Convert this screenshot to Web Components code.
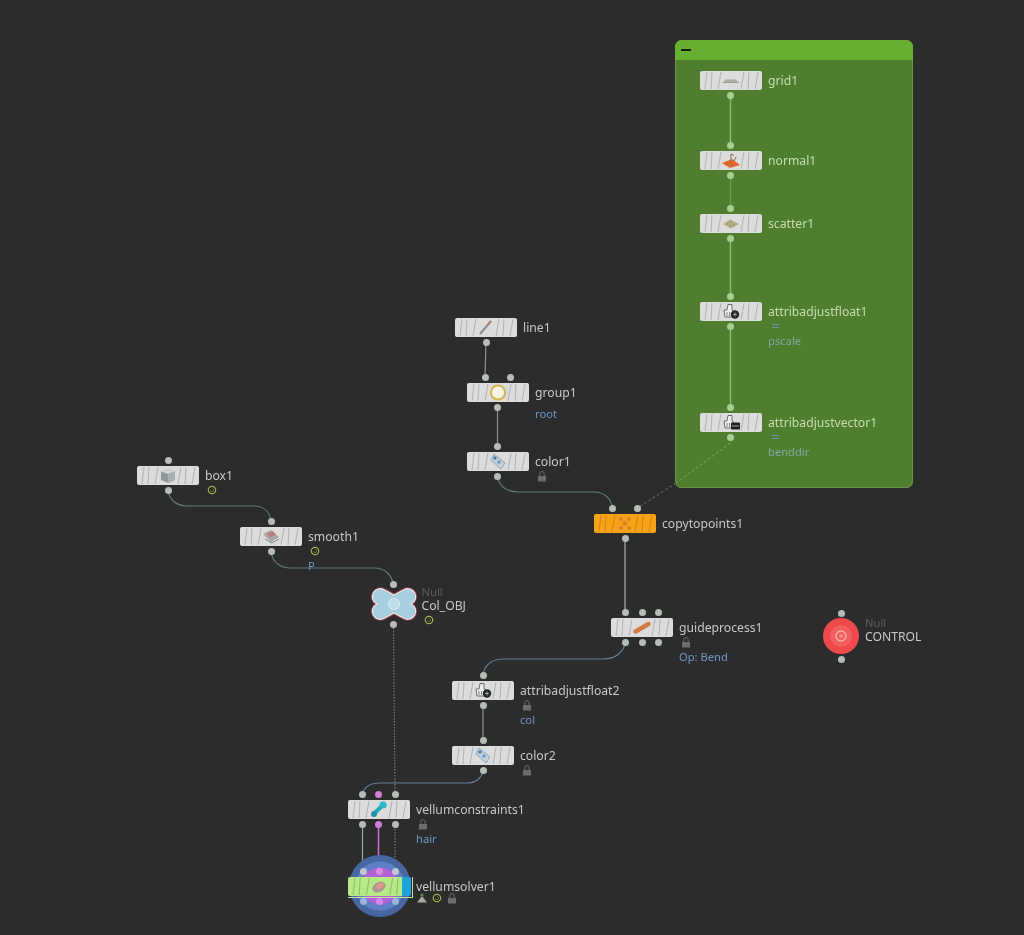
<!DOCTYPE html>
<html lang="en">
<head>
<meta charset="utf-8">
<title>Network view</title>
<style>
  html, body { margin: 0; background: #2c2c2c; }
</style>
</head>
<body>
<hou-network>
  <hou-netbox x="675" y="40" w="238" h="448"></hou-netbox>
  <hou-wires></hou-wires>

  <hou-node x="700" y="71" icon="grid" label="grid1" out="30.5" ingroup></hou-node>
  <hou-node x="700" y="151" icon="normal" label="normal1" in="30.5" out="30.5" ingroup></hou-node>
  <hou-node x="700" y="214" icon="scatter" label="scatter1" in="30.5" out="30.5" ingroup></hou-node>
  <hou-node x="700" y="302" icon="adjust" label="attribadjustfloat1" in="30.5" out="30.5" flags="eq" sub="pscale" ingroup></hou-node>
  <hou-node x="700" y="413" icon="adjustv" label="attribadjustvector1" in="30.5" out="30.5" flags="eq" sub="benddir" ingroup></hou-node>

  <hou-node x="455" y="318" icon="line" label="line1" out="31"></hou-node>
  <hou-node x="467" y="383" icon="group" label="group1" in="18,43" out="30.5" sub="root"></hou-node>
  <hou-node x="467" y="452" icon="color" label="color1" in="30.5" out="30.5" flags="lock"></hou-node>
  <hou-node x="594" y="514" icon="copy" label="copytopoints1" in="18,43.5" out="31" tone="orange"></hou-node>

  <hou-node x="137" y="466" icon="box" label="box1" in="31" out="31" flags="disp"></hou-node>
  <hou-node x="240" y="527" icon="smooth" label="smooth1" in="31" out="31" flags="disp" sub="P"></hou-node>
  <hou-null cx="393.5" cy="604" shape="cross" label="Col_OBJ" flags="disp"></hou-null>
  <hou-null cx="841" cy="636" shape="round" label="CONTROL"></hou-null>

  <hou-node x="611" y="618" icon="guide" label="guideprocess1" in="14.5,31,47.5" out="14.5,31,47.5" flags="lock" sub="Op: Bend"></hou-node>
  <hou-node x="452" y="681" icon="adjust" label="attribadjustfloat2" in="31" out="31" flags="lock" sub="col"></hou-node>
  <hou-node x="452" y="746" icon="color" label="color2" in="31" out="31" flags="lock"></hou-node>
  <hou-node x="348" y="800" icon="constraints" label="vellumconstraints1" in="14.5,30.5:pink,47" out="14.5,30.5:pink,47" flags="lock" sub="hair"></hou-node>
  <hou-solver x="348" y="877" label="vellumsolver1"></hou-solver>
</hou-network>

<script>
/* ------------- SHARED ------------- */
const FONT = `"Noto Sans", "Open Sans", sans-serif`;

const STRIPES = /*html*/`
  <svg class="stripes" viewBox="0 0 62 19" width="100%" height="100%" preserveAspectRatio="none">
    <g stroke="#8f9092" stroke-width="1" fill="none" opacity=".55">
      <path d="M5 18 L7 1"/><path d="M11 18 L12 1"/><path d="M18 18 L21 1"/>
      <path d="M41 18 L44 1"/><path d="M48 18 L49 1"/><path d="M55 18 L58 1"/>
    </g>
  </svg>`;

const ADJUST_HAND = `<path d="M3 8 H6 L7 2.5 H11 V8 H12 V15 H4 Z" fill="#eceef0" stroke="#6a6f73" stroke-width="1"/><path d="M6 10 V14 M8.5 10 V14" stroke="#6a6f73" stroke-width=".8"/>`;

const ICONS = {
  grid: `<path d="M1 12 L5 8 H14 L19 12 Z" fill="#c0c0ba"/><path d="M3.5 10 H16 M2 11.5 H18" stroke="#8c8c86" stroke-width=".7"/>`,
  normal: `<path d="M1 12 L11 8 L19 14 L9 17 Z" fill="#e0672c"/><path d="M10 11 V3 L13 4.5 M13 10 L15 6" stroke="#8c6a58" stroke-width="1" fill="none"/>`,
  scatter: `<path d="M2 10 L9 5.5 L18 10 L10 14.5 Z" fill="#b3ad84"/><path d="M6 10 h1 M10 8 h1 M12 11 h1 M9 12 h1" stroke="#7f7b5e" stroke-width="1"/>`,
  adjust: `${ADJUST_HAND}<circle cx="14" cy="12.5" r="4.2" fill="#26282a"/><path d="M12 12.5 H16 M14 10.5 V14.5" stroke="#bdbdbd" stroke-width=".8"/>`,
  adjustv: `${ADJUST_HAND}<rect x="10" y="9.5" width="9" height="7" rx="1" fill="#1d1f20"/><path d="M11 13 H18" stroke="#cfcfcf" stroke-width=".8"/>`,
  line: `<path d="M4 16 L15 3" stroke="#8d8d8d" stroke-width="2"/><path d="M12 7 L15 3" stroke="#b5826a" stroke-width="2"/>`,
  group: `<circle cx="10" cy="9.5" r="7" fill="#f6f4e6" stroke="#d7b64a" stroke-width="2"/><path d="M15 3.5 A8 8 0 0 1 16 15" stroke="#b8c99a" stroke-width="1" fill="none"/>`,
  color: `<path d="M6 2 L17 11 L13 17 L3 8 Z" fill="#c4d0da" stroke="#8b98a2" stroke-width=".8"/><circle cx="7" cy="6" r="1.7" fill="#4a7fb0"/><circle cx="11" cy="10" r="1.7" fill="#6d9bc0"/>`,
  box: `<path d="M3 5.5 L10 3 L17 5.5 V14 L10 17 L3 14 Z" fill="#8f9798"/><path d="M3 5.5 L10 8 L17 5.5 L10 3 Z" fill="#cfd6d7"/><path d="M10 8 V17 L17 14 V5.5 Z" fill="#a9b1b2"/>`,
  smooth: `<path d="M2 7 L10 3 L18 10 L10 15 Z" fill="#a9a6a6"/><path d="M6 6 L12 4 L15 8 L9 10 Z" fill="#b77d83"/><path d="M4 12 L11 16 L18 12" stroke="#85878a" fill="none"/>`,
  copy: `<g fill="#d8842a"><circle cx="6" cy="5" r="2"/><circle cx="14" cy="5" r="2"/><circle cx="10" cy="9.5" r="2.4"/><circle cx="6" cy="14" r="2"/><circle cx="14" cy="14" r="2"/></g>`,
  guide: `<path d="M3.5 13.5 L16.5 6" stroke="#d27a45" stroke-width="4.4" stroke-linecap="round"/>`,
  constraints: `<path d="M4.5 14 L13 6" stroke="#21a7b8" stroke-width="4"/><circle cx="14" cy="5" r="3.6" fill="#2bb7c2"/><circle cx="5" cy="14" r="3" fill="#1e93a8"/>`,
  solver: `<ellipse cx="10" cy="10" rx="7" ry="5" fill="#a99a8f" transform="rotate(-30 10 10)"/><ellipse cx="11" cy="9" rx="4" ry="2.5" fill="#dc9a86" transform="rotate(-30 11 9)"/>`
};

const FLAGS = {
  lock: `<svg viewBox="0 0 12 12" width="12" height="12"><path d="M3.8 6 V3.8 a2.2 2.2 0 0 1 4.4 0 V6" fill="none" stroke="#6c6c6c" stroke-width="1"/><rect x="2" y="6" width="8" height="5.5" fill="#6c6c6c"/></svg>`,
  disp: `<svg viewBox="0 0 12 12" width="12" height="12"><circle cx="6" cy="6" r="3.7" fill="#23241d" stroke="#a9ac55" stroke-width="1.2"/><path d="M6 4.5 A1.6 1.6 0 1 1 4.5 6" fill="none" stroke="#7f8d4a" stroke-width=".7"/></svg>`,
  eq: `<svg viewBox="0 0 12 12" width="12" height="12"><path d="M3 4.5 H10 M3 7.5 H10" stroke="#6f94a8" stroke-width="1.2"/></svg>`,
  bypass: `<svg viewBox="0 0 12 12" width="12" height="12"><path d="M1 10.5 L6 4 L11 10.5 Z" fill="#a8aaa0"/><circle cx="6" cy="3" r="1.6" fill="#5f8a3e"/></svg>`
};

const flagsMarkup = (value) => (value || "").split(",").filter(Boolean).map(f => FLAGS[f]).join("");

const dotsMarkup = (value, side) => (value || "").split(",").filter(Boolean).map(item => {
  const [x, tone] = item.split(":");
  return `<span class="dot ${side} ${tone || ""}" style="left:${x}px"></span>`;
}).join("");

const LABEL_STYLES = /*css*/`
  .text {
    position: absolute;
    left: calc(100% + 6px);
    top: 0;
    white-space: nowrap;
    font: 12.2px/19px ${FONT};
    color: var(--label, #c8c8c8);
  }
  .name { height: 19px; }
  .flags { display: flex; gap: 3px; height: 14px; margin: -2px 0 0 1px; align-items: center; }
  .flags:empty { height: 4px; margin: 0; }
  .sub { font-size: 11.2px; line-height: 15px; color: var(--sub, #7094c4); }
  .sub:empty { display: none; }
`;

const DOT_STYLES = /*css*/`
  .dot {
    position: absolute;
    width: 7px;
    height: 7px;
    margin-left: -3.5px;
    border-radius: 50%;
    background: var(--dot, #b6bcb6);
  }
  .dot.in { top: -9px; }
  .dot.out { bottom: -9px; }
  .dot.pink { background: #cf7fd6; }
`;

/* ------------ NETWORK ------------- */
const template_network = document.createElement("template");

template_network.innerHTML = /*html*/`
  <style>
    :host {
      display: block;
      position: relative;
      width: 1024px;
      height: 935px;
      overflow: hidden;
      background: #2c2c2c;
      filter: blur(.5px);
    }
  </style>
  <slot></slot>
`;

class HouNetwork extends HTMLElement {
  constructor() {
    super();
    this.attachShadow({ mode: "open" }).append(template_network.content.cloneNode(true));
  }
}

/* ------------- NETBOX ------------- */
const template_netbox = document.createElement("template");

template_netbox.innerHTML = /*html*/`
  <style>
    :host {
      display: flex;
      flex-direction: column;
      position: absolute;
      box-sizing: border-box;
      border-radius: 7px;
      overflow: hidden;
      background: #4f7f2e;
      box-shadow: inset -1px -1px 0 #659643, inset 1px 0 0 #659643;
    }
    header {
      display: flex;
      align-items: center;
      flex: 0 0 20px;
      padding-left: 6px;
      background: #67b02f;
    }
    i { display: block; width: 10px; height: 2px; background: #17210f; }
  </style>
  <header><i></i></header>
`;

class HouNetbox extends HTMLElement {
  constructor() {
    super();
    this.attachShadow({ mode: "open" }).append(template_netbox.content.cloneNode(true));
  }

  connectedCallback() {
    this.style.left = this.getAttribute("x") + "px";
    this.style.top = this.getAttribute("y") + "px";
    this.style.width = this.getAttribute("w") + "px";
    this.style.height = this.getAttribute("h") + "px";
  }
}

/* -------------- WIRES ------------- */
const template_wires = document.createElement("template");

template_wires.innerHTML = /*html*/`
  <style>
    :host { position: absolute; inset: 0; display: block; }
    svg { display: block; }
    path { fill: none; stroke-width: 1.2; }
    .plain { stroke: #8d8f8d; }
    .teal { stroke: #5f7d7a; }
    .blue { stroke: #64809a; }
    .green { stroke: #8dbb78; stroke-width: 1.4; }
    .soft { stroke: #6d9a54; }
    .pink { stroke: #c36fca; stroke-width: 1.6; }
    .light { stroke: #9aa8a8; }
    .dots { stroke: #7a7a7a; stroke-dasharray: 1.5 1.5; }
    .dash-g { stroke: #6f9a53; stroke-dasharray: 3 2; }
    .dash { stroke: #535f54; stroke-dasharray: 3 2; }
  </style>
  <svg width="1024" height="935" viewBox="0 0 1024 935">
    <path class="green" d="M730.5 94 V145"/>
    <path class="soft" d="M730.5 174 V208"/>
    <path class="green" d="M730.5 238 V296"/>
    <path class="green" d="M730.5 326 V407"/>
    <path class="dash-g" d="M730.5 443 L676 483"/>
    <path class="dash" d="M676 483 L637.5 508"/>

    <path class="plain" d="M486 342 L485 377"/>
    <path class="plain" d="M497.5 407 V446"/>
    <path class="teal" d="M497.5 477 C499 486 507 492 518 492 H594 C605 492 611 499 612.5 508"/>
    <path class="teal" d="M168 490 C169 500 177 506 187 506 H254 C264 506 270 512 271 522"/>
    <path class="teal" d="M271 551 C272 562 280 568 291 568 H374 C385 568 392 575 393.5 585"/>
    <path class="dots" d="M393.5 625 L395 795"/>
    <path class="plain" d="M625 538 V613" style="stroke-width:1.6"/>
    <path class="blue" d="M625.5 642 C624 652 615 659 604 659 H504 C491 659 484 666 483 675"/>
    <path class="plain" d="M483 705 V740"/>
    <path class="blue" d="M483 770 C482 778 476 783 467 783 H380 C369 783 363 788 362.5 795"/>

    <path class="light" d="M362.5 823 V871"/>
    <path class="pink" d="M378.5 823 V871"/>
    <path class="dots" d="M395 823 V871"/>
  </svg>
`;

class HouWires extends HTMLElement {
  constructor() {
    super();
    this.attachShadow({ mode: "open" }).append(template_wires.content.cloneNode(true));
  }
}

/* -------------- NODE -------------- */
const template_node = document.createElement("template");

template_node.innerHTML = /*html*/`
  <style>
    :host {
      display: block;
      position: absolute;
      width: 62px;
      height: 19px;
    }
    :host([ingroup]) {
      --dot: #a9cd97;
      --label: #c4deaf;
      --sub: #7fa3a6;
    }
    .body {
      position: relative;
      width: 100%;
      height: 100%;
      border-radius: 2px;
      background: #dcdcdc;
      overflow: hidden;
    }
    :host([tone="orange"]) .body { background: #f8a217; }
    :host([tone="orange"]) .stripes g { stroke: #b36f10; }
    .stripes { display: block; position: absolute; inset: 0; }
    .icon { position: absolute; left: 21px; top: 0; }
    ${DOT_STYLES}
    ${LABEL_STYLES}
  </style>
  <div class="body">
    ${STRIPES}
    <svg class="icon" viewBox="0 0 20 19" width="20" height="19"></svg>
  </div>
  <div class="inputs"></div>
  <div class="outputs"></div>
  <div class="text">
    <div class="name"></div>
    <div class="flags"></div>
    <div class="sub"></div>
  </div>
`;

class HouNode extends HTMLElement {
  constructor() {
    super();
    this.attachShadow({ mode: "open" }).append(template_node.content.cloneNode(true));
  }

  connectedCallback() {
    const root = this.shadowRoot;
    this.style.left = this.getAttribute("x") + "px";
    this.style.top = this.getAttribute("y") + "px";
    root.querySelector(".icon").innerHTML = ICONS[this.getAttribute("icon")] || "";
    root.querySelector(".inputs").innerHTML = dotsMarkup(this.getAttribute("in"), "in");
    root.querySelector(".outputs").innerHTML = dotsMarkup(this.getAttribute("out"), "out");
    root.querySelector(".name").textContent = this.getAttribute("label");
    root.querySelector(".flags").innerHTML = flagsMarkup(this.getAttribute("flags"));
    root.querySelector(".sub").textContent = this.getAttribute("sub") || "";
  }
}

/* -------------- NULL -------------- */
const CROSS_ARMS = `<rect x="3" y="12.5" width="46" height="15" rx="7.5" transform="rotate(28 26 20)"/><rect x="3" y="12.5" width="46" height="15" rx="7.5" transform="rotate(-28 26 20)"/>`;

const SHAPES = {
  cross: /*html*/`
    <svg viewBox="0 0 52 40" width="52" height="40">
      <g fill="none" stroke="#8a3f4c" stroke-width="4">${CROSS_ARMS}</g>
      <g fill="none" stroke="#f0e6e6" stroke-width="2.2">${CROSS_ARMS}</g>
      <g fill="#a8cfe0">${CROSS_ARMS}</g>
      <circle cx="26" cy="20" r="5.5" fill="#bcdde8" stroke="#dcecf0" stroke-width="1"/>
    </svg>`,
  round: /*html*/`
    <svg viewBox="0 0 36 36" width="36" height="36">
      <circle cx="18" cy="18" r="18" fill="#f0494c"/>
      <circle cx="18" cy="18" r="11" fill="#f25f5f"/>
      <circle cx="18" cy="18" r="5" fill="none" stroke="#f6b0a8" stroke-width="1.4"/>
      <circle cx="18" cy="18" r="2" fill="#f58a80"/>
    </svg>`
};

const template_null = document.createElement("template");

template_null.innerHTML = /*html*/`
  <style>
    :host {
      display: block;
      position: absolute;
      width: 0;
      height: 0;
    }
    .shape { position: absolute; transform: translate(-50%, -50%); line-height: 0; }
    .dot {
      position: absolute;
      width: 7px;
      height: 7px;
      margin: -3.5px;
      border-radius: 50%;
      background: #b6bcb6;
    }
    .text {
      position: absolute;
      white-space: nowrap;
      font: 12.2px/14px ${FONT};
      color: #c8c8c8;
    }
    .type { color: #5c5c5c; font-size: 11.2px; }
    .flags { display: flex; height: 14px; align-items: center; margin-left: 1px; }
  </style>
  <div class="shape"></div>
  <span class="dot top"></span>
  <span class="dot bottom"></span>
  <div class="text">
    <div class="type">Null</div>
    <div class="name"></div>
    <div class="flags"></div>
  </div>
`;

class HouNull extends HTMLElement {
  constructor() {
    super();
    this.attachShadow({ mode: "open" }).append(template_null.content.cloneNode(true));
  }

  connectedCallback() {
    const root = this.shadowRoot;
    const shape = this.getAttribute("shape");
    const reach = shape === "cross" ? 20 : 23;
    this.style.left = this.getAttribute("cx") + "px";
    this.style.top = this.getAttribute("cy") + "px";
    root.querySelector(".shape").innerHTML = SHAPES[shape];
    root.querySelector(".top").style.top = -reach + "px";
    root.querySelector(".bottom").style.top = reach + "px";
    root.querySelector(".text").style.left = (shape === "cross" ? 28 : 24) + "px";
    root.querySelector(".text").style.top = (shape === "cross" ? "-19px" : "-20px");
    root.querySelector(".name").textContent = this.getAttribute("label");
    root.querySelector(".flags").innerHTML = flagsMarkup(this.getAttribute("flags"));
  }
}

/* ------------- SOLVER ------------- */
const template_solver = document.createElement("template");

template_solver.innerHTML = /*html*/`
  <style>
    :host {
      display: block;
      position: absolute;
      width: 63px;
      height: 19px;
    }
    .halo {
      position: absolute;
      left: 0.5px;
      top: -22px;
      width: 62px;
      height: 62px;
      border-radius: 50%;
      background: radial-gradient(circle, #b262d6 0 18px, #5f7fc4 19px 24px, #46679f 25px);
    }
    .body {
      position: absolute;
      inset: 0;
      border-radius: 2px;
      background: linear-gradient(90deg, #b7ea86 0 85%, #17a5e4 86% 100%);
      overflow: hidden;
    }
    .frame {
      position: absolute;
      inset: 0 -2px -2px 0;
      border-right: 1px solid #c6e2aa;
      border-bottom: 1px solid #c6e2aa;
    }
    .stripes { display: block; position: absolute; inset: 0; width: 100%; height: 100%; }
    .stripes g { stroke: #708f58; }
    .icon { position: absolute; left: 21px; top: 0; }
    ${DOT_STYLES}
    .dot { background: #c4c4d4; }
    .dot.pink { background: #d98be0; }
    .dot.out { background: #9ab4e0; }
    .dot.out.pink { background: #d08be6; }
    ${LABEL_STYLES}
    .text { left: calc(100% + 5px); }
    .flags { margin-top: -5px; margin-left: 0; }
  </style>
  <div class="halo"></div>
  ${dotsMarkup("15,31:pink,47", "in")}
  ${dotsMarkup("15,31:pink,47", "out")}
  <div class="frame"></div>
  <div class="body">
    ${STRIPES}
    <svg class="icon" viewBox="0 0 20 19" width="20" height="19">${ICONS.solver}</svg>
  </div>
  <div class="text">
    <div class="name"></div>
    <div class="flags">${flagsMarkup("bypass,disp,lock")}</div>
  </div>
`;

class HouSolver extends HTMLElement {
  constructor() {
    super();
    this.attachShadow({ mode: "open" }).append(template_solver.content.cloneNode(true));
  }

  connectedCallback() {
    this.style.left = this.getAttribute("x") + "px";
    this.style.top = this.getAttribute("y") + "px";
    this.shadowRoot.querySelector(".name").textContent = this.getAttribute("label");
  }
}

/* ------------ REGISTER ------------ */
customElements.define("hou-network", HouNetwork);
customElements.define("hou-netbox", HouNetbox);
customElements.define("hou-wires", HouWires);
customElements.define("hou-node", HouNode);
customElements.define("hou-null", HouNull);
customElements.define("hou-solver", HouSolver);
</script>
</body>
</html>
